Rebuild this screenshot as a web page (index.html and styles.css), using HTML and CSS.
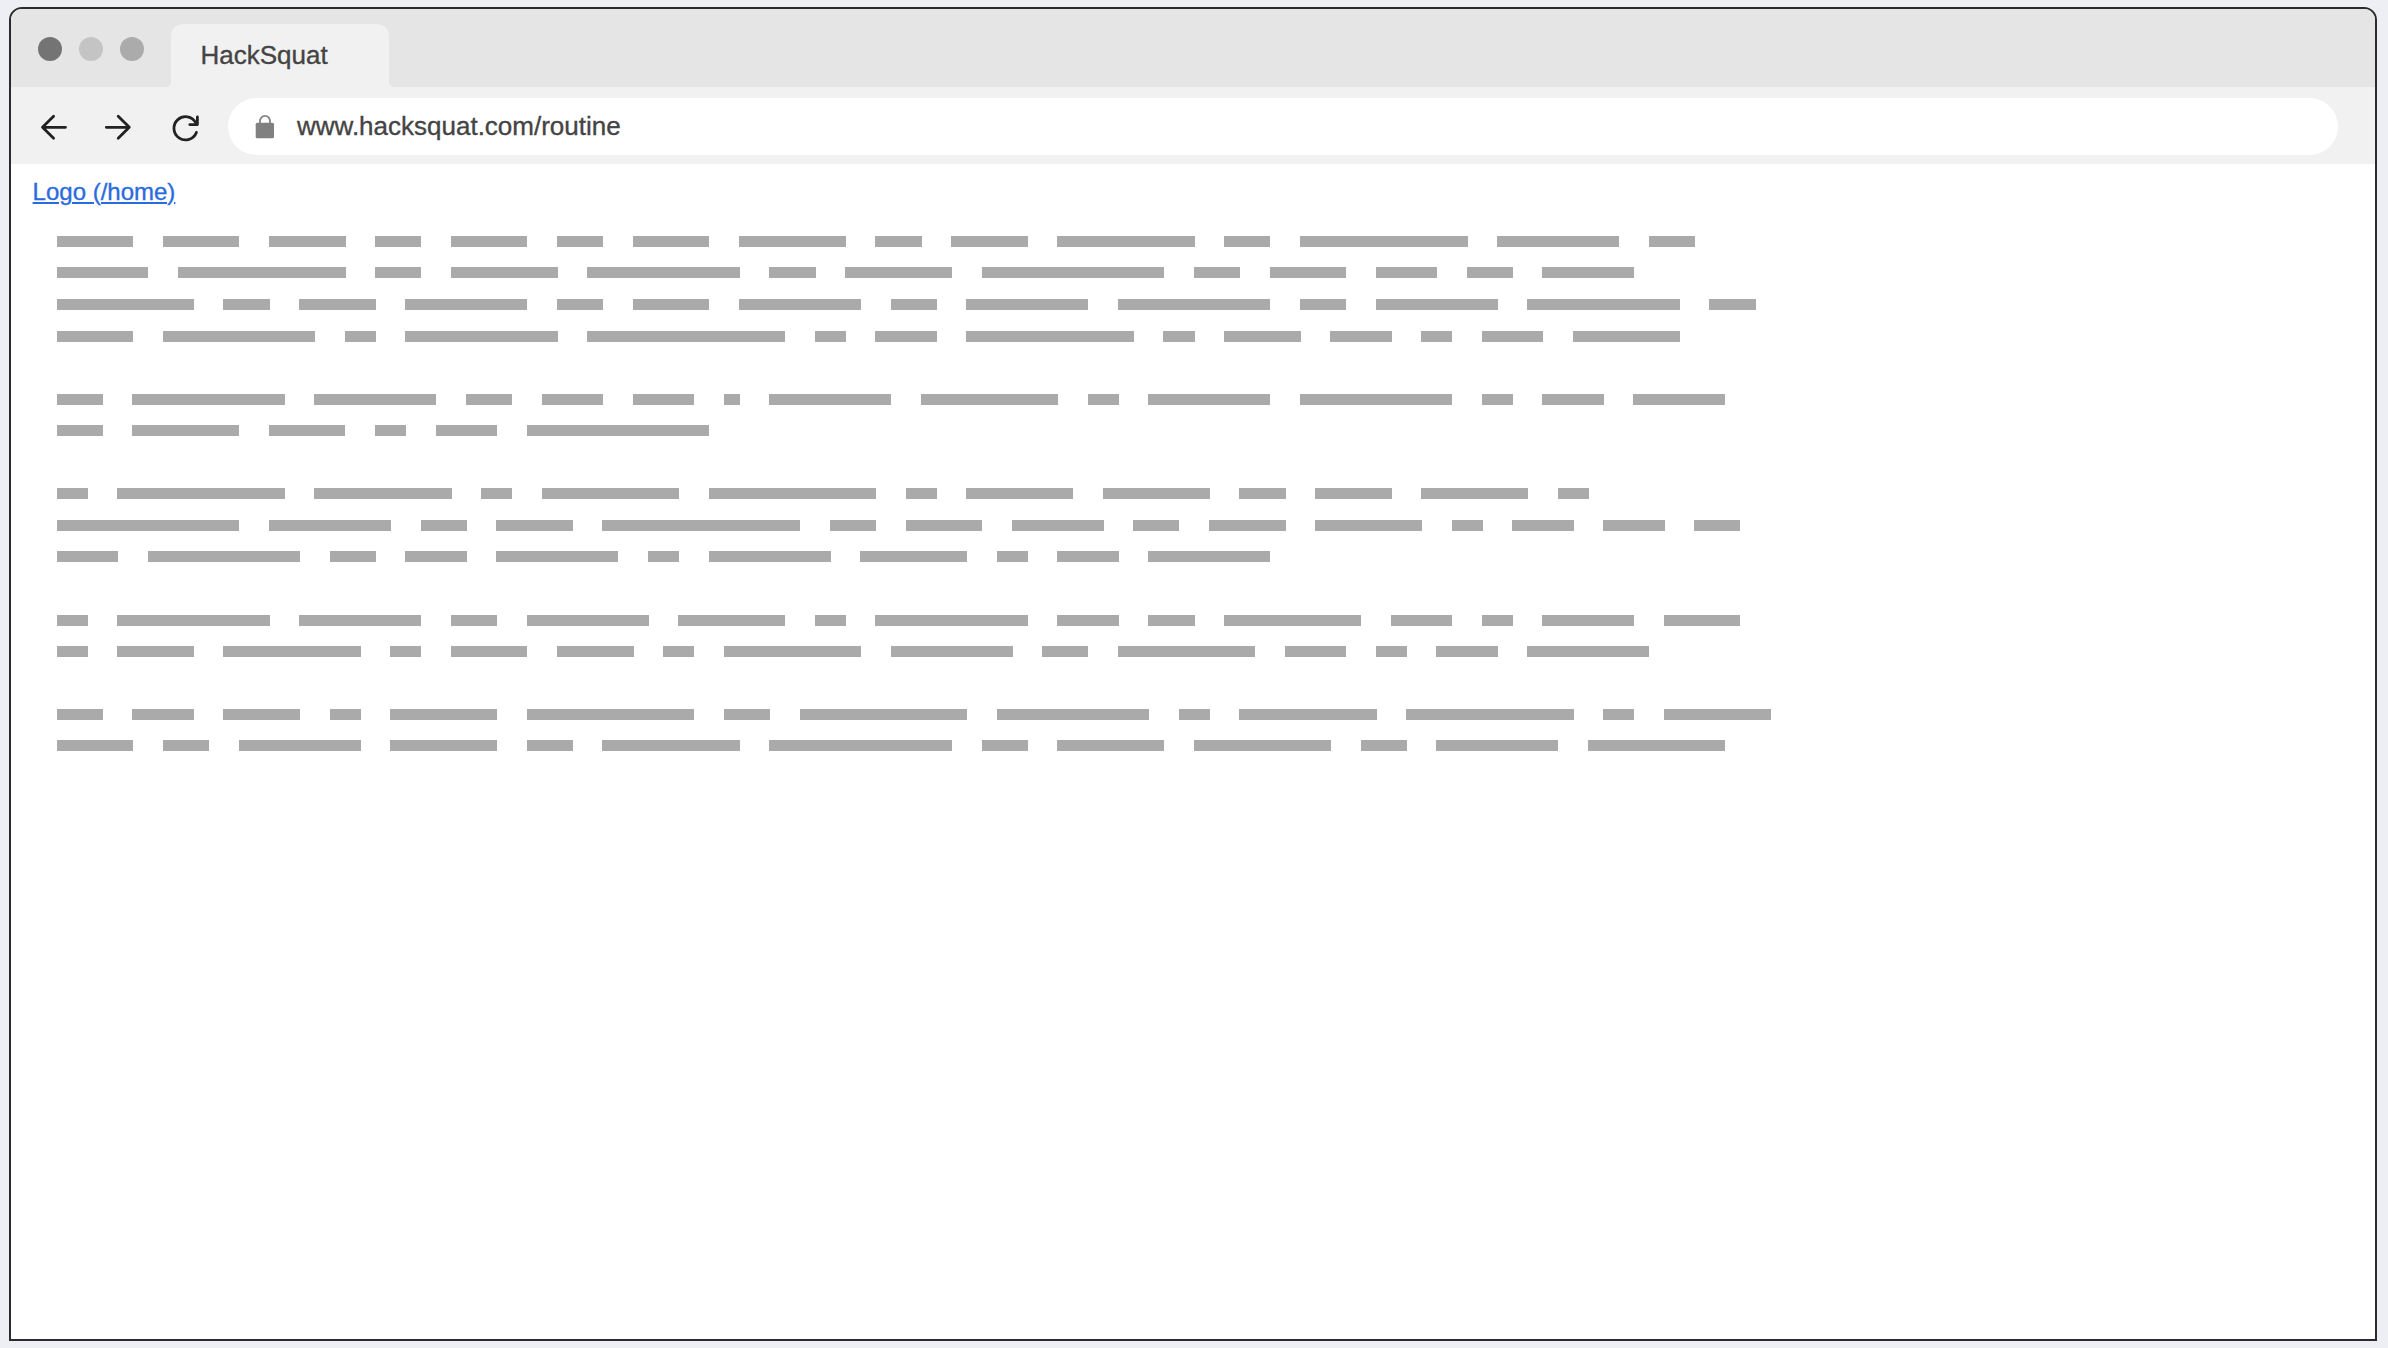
FILE: index.html
```html
<!DOCTYPE html>
<html lang="en">
<head>
<meta charset="utf-8">
<title>HackSquat</title>
<link rel="stylesheet" href="styles.css">
</head>
<body>
<div class="window">
  <header class="tabs">
    <div class="lights"><span class="light dark"></span><span class="light pale"></span><span class="light mid"></span></div>
    <div class="tab">HackSquat</div>
  </header>
  <nav class="toolbar">
    <svg class="nav-icons" width="188" height="76" viewBox="0 0 188 76" fill="none" stroke="#222" stroke-width="2.8" stroke-linecap="round" stroke-linejoin="round">
      <path d="M54.5 40.3H31.5M42.6 29.2L31.5 40.3L42.6 51.3"/>
      <path d="M95.3 40.3H118.3M107.2 29.2L118.3 40.3L107.2 51.3"/>
      <path d="M185.4 45.4A11.6 11.6 0 1 1 184.8 35.8" stroke-width="2.8"/>
      <path d="M186.4 30V37.6H178.8" stroke-width="2.8"/>
    </svg>
    <div class="address">
      <svg class="lock" width="20" height="26" viewBox="0 0 20 26"><path d="M5 10V7.2a5 5.4 0 0 1 10 0V10" fill="none" stroke="#858585" stroke-width="1.8"/><rect x=".7" y="8.7" width="18.3" height="15.6" rx="1.6" fill="#808080"/></svg>
      <span class="url">www.hacksquat.com/routine</span>
    </div>
  </nav>
  <main class="page">
    <a class="logo" href="#">Logo (/home)</a>
    <div class="copy">
      <div class="para">
        <div class="line"><i class="w5"></i><i class="w5"></i><i class="w5"></i><i class="w3"></i><i class="w5"></i><i class="w3"></i><i class="w5"></i><i class="w7"></i><i class="w3"></i><i class="w5"></i><i class="w9"></i><i class="w3"></i><i class="w11"></i><i class="w8"></i><i class="w3"></i></div>
        <div class="line"><i class="w6"></i><i class="w11"></i><i class="w3"></i><i class="w7"></i><i class="w10"></i><i class="w3"></i><i class="w7"></i><i class="w12"></i><i class="w3"></i><i class="w5"></i><i class="w4"></i><i class="w3"></i><i class="w6"></i></div>
        <div class="line"><i class="w9"></i><i class="w3"></i><i class="w5"></i><i class="w8"></i><i class="w3"></i><i class="w5"></i><i class="w8"></i><i class="w3"></i><i class="w8"></i><i class="w10"></i><i class="w3"></i><i class="w8"></i><i class="w10"></i><i class="w3"></i></div>
        <div class="line"><i class="w5"></i><i class="w10"></i><i class="w2"></i><i class="w10"></i><i class="w13"></i><i class="w2"></i><i class="w4"></i><i class="w11"></i><i class="w2"></i><i class="w5"></i><i class="w4"></i><i class="w2"></i><i class="w4"></i><i class="w7"></i></div>
      </div>
      <div class="para">
        <div class="line"><i class="w3"></i><i class="w10"></i><i class="w8"></i><i class="w3"></i><i class="w4"></i><i class="w4"></i><i class="w1"></i><i class="w8"></i><i class="w9"></i><i class="w2"></i><i class="w8"></i><i class="w10"></i><i class="w2"></i><i class="w4"></i><i class="w6"></i></div>
        <div class="line"><i class="w3"></i><i class="w7"></i><i class="w5"></i><i class="w2"></i><i class="w4"></i><i class="w12"></i></div>
      </div>
      <div class="para">
        <div class="line"><i class="w2"></i><i class="w11"></i><i class="w9"></i><i class="w2"></i><i class="w9"></i><i class="w11"></i><i class="w2"></i><i class="w7"></i><i class="w7"></i><i class="w3"></i><i class="w5"></i><i class="w7"></i><i class="w2"></i></div>
        <div class="line"><i class="w12"></i><i class="w8"></i><i class="w3"></i><i class="w5"></i><i class="w13"></i><i class="w3"></i><i class="w5"></i><i class="w6"></i><i class="w3"></i><i class="w5"></i><i class="w7"></i><i class="w2"></i><i class="w4"></i><i class="w4"></i><i class="w3"></i></div>
        <div class="line"><i class="w4"></i><i class="w10"></i><i class="w3"></i><i class="w4"></i><i class="w8"></i><i class="w2"></i><i class="w8"></i><i class="w7"></i><i class="w2"></i><i class="w4"></i><i class="w8"></i></div>
      </div>
      <div class="para para-low">
        <div class="line"><i class="w2"></i><i class="w10"></i><i class="w8"></i><i class="w3"></i><i class="w8"></i><i class="w7"></i><i class="w2"></i><i class="w10"></i><i class="w4"></i><i class="w3"></i><i class="w9"></i><i class="w4"></i><i class="w2"></i><i class="w6"></i><i class="w5"></i></div>
        <div class="line"><i class="w2"></i><i class="w5"></i><i class="w9"></i><i class="w2"></i><i class="w5"></i><i class="w5"></i><i class="w2"></i><i class="w9"></i><i class="w8"></i><i class="w3"></i><i class="w9"></i><i class="w4"></i><i class="w2"></i><i class="w4"></i><i class="w8"></i></div>
      </div>
      <div class="para">
        <div class="line"><i class="w3"></i><i class="w4"></i><i class="w5"></i><i class="w2"></i><i class="w7"></i><i class="w11"></i><i class="w3"></i><i class="w11"></i><i class="w10"></i><i class="w2"></i><i class="w9"></i><i class="w11"></i><i class="w2"></i><i class="w7"></i></div>
        <div class="line"><i class="w5"></i><i class="w3"></i><i class="w8"></i><i class="w7"></i><i class="w3"></i><i class="w9"></i><i class="w12"></i><i class="w3"></i><i class="w7"></i><i class="w9"></i><i class="w3"></i><i class="w8"></i><i class="w9"></i></div>
      </div>
    </div>
  </main>
</div>
</body>
</html>
```
FILE: styles.css
```css
* { box-sizing: border-box; }
body {
  margin: 0;
  height: 1348px;
  padding: 7px 11px 7px 9px;
  background: #eeeff4;
  font-family: "Liberation Sans", Arial, sans-serif;
  color: #444;
  -webkit-text-stroke: 0.35px currentColor;
  overflow: hidden;
}
.window {
  height: 1334px;
  border: 2px solid #2b2b2f;
  border-radius: 13px 13px 0 0;
  background: #fff;
  overflow: hidden;
}
.tabs {
  display: flex;
  height: 78px;
  background: #e5e5e5;
}
.lights {
  display: flex;
  gap: 17px;
  width: 160px;
  padding: 28px 0 0 26.7px;
}
.light { width: 24px; height: 24px; border-radius: 50%; }
.dark { background: #747474; }
.pale { background: #c4c4c4; }
.mid { background: #ababab; }
.tab {
  position: relative;
  width: 218px;
  height: 63px;
  margin-top: 15px;
  padding-left: 29.5px;
  border-radius: 12px 12px 0 0;
  background: #f1f1f1;
  font-size: 26px;
  line-height: 62px;
}
.tab::before, .tab::after {
  content: "";
  position: absolute;
  bottom: 0;
  width: 4px;
  height: 4px;
}
.tab::before { left: -4px; background: radial-gradient(circle at 0 0, #e5e5e5 3.5px, #f1f1f1 4.2px); }
.tab::after { right: -4px; background: radial-gradient(circle at 100% 0, #e5e5e5 3.5px, #f1f1f1 4.2px); }
.toolbar {
  display: flex;
  height: 77px;
  padding-right: 37px;
  background: #f1f1f1;
}
.nav-icons { flex: none; margin-right: 29px; }
.address {
  flex: 1;
  display: flex;
  align-items: center;
  gap: 22px;
  height: 57px;
  margin-top: 11px;
  padding-left: 27px;
  border-radius: 29px;
  background: #fff;
}
.url { padding-bottom: 2px; font-size: 26px; line-height: 30px; }
.page { padding: 14px 22px; }
.logo {
  display: block;
  width: max-content;
  height: 30px;
  margin-left: -0.4px;
  font-size: 24px;
  line-height: 28px;
  color: #2b6be0;
  text-decoration-thickness: 2px;
  text-underline-offset: 2px;
}
.copy {
  display: flex;
  flex-direction: column;
  gap: 31.55px;
  padding: 27.95px 0 0 23.6px;
}
.line {
  display: flex;
  gap: 29.53px;
  height: 31.54px;
}
.para-low { padding-top: 0.3px; margin-bottom: -0.6px; }
.line i { flex: none; height: 11px; width: calc(var(--n) * 15.165px + 0.8px); background: #aaa; }
.w1 { --n: 1; }
.w2 { --n: 2; }
.w3 { --n: 3; }
.w4 { --n: 4; }
.w5 { --n: 5; }
.w6 { --n: 6; }
.w7 { --n: 7; }
.w8 { --n: 8; }
.w9 { --n: 9; }
.w10 { --n: 10; }
.w11 { --n: 11; }
.w12 { --n: 12; }
.w13 { --n: 13; }
```
